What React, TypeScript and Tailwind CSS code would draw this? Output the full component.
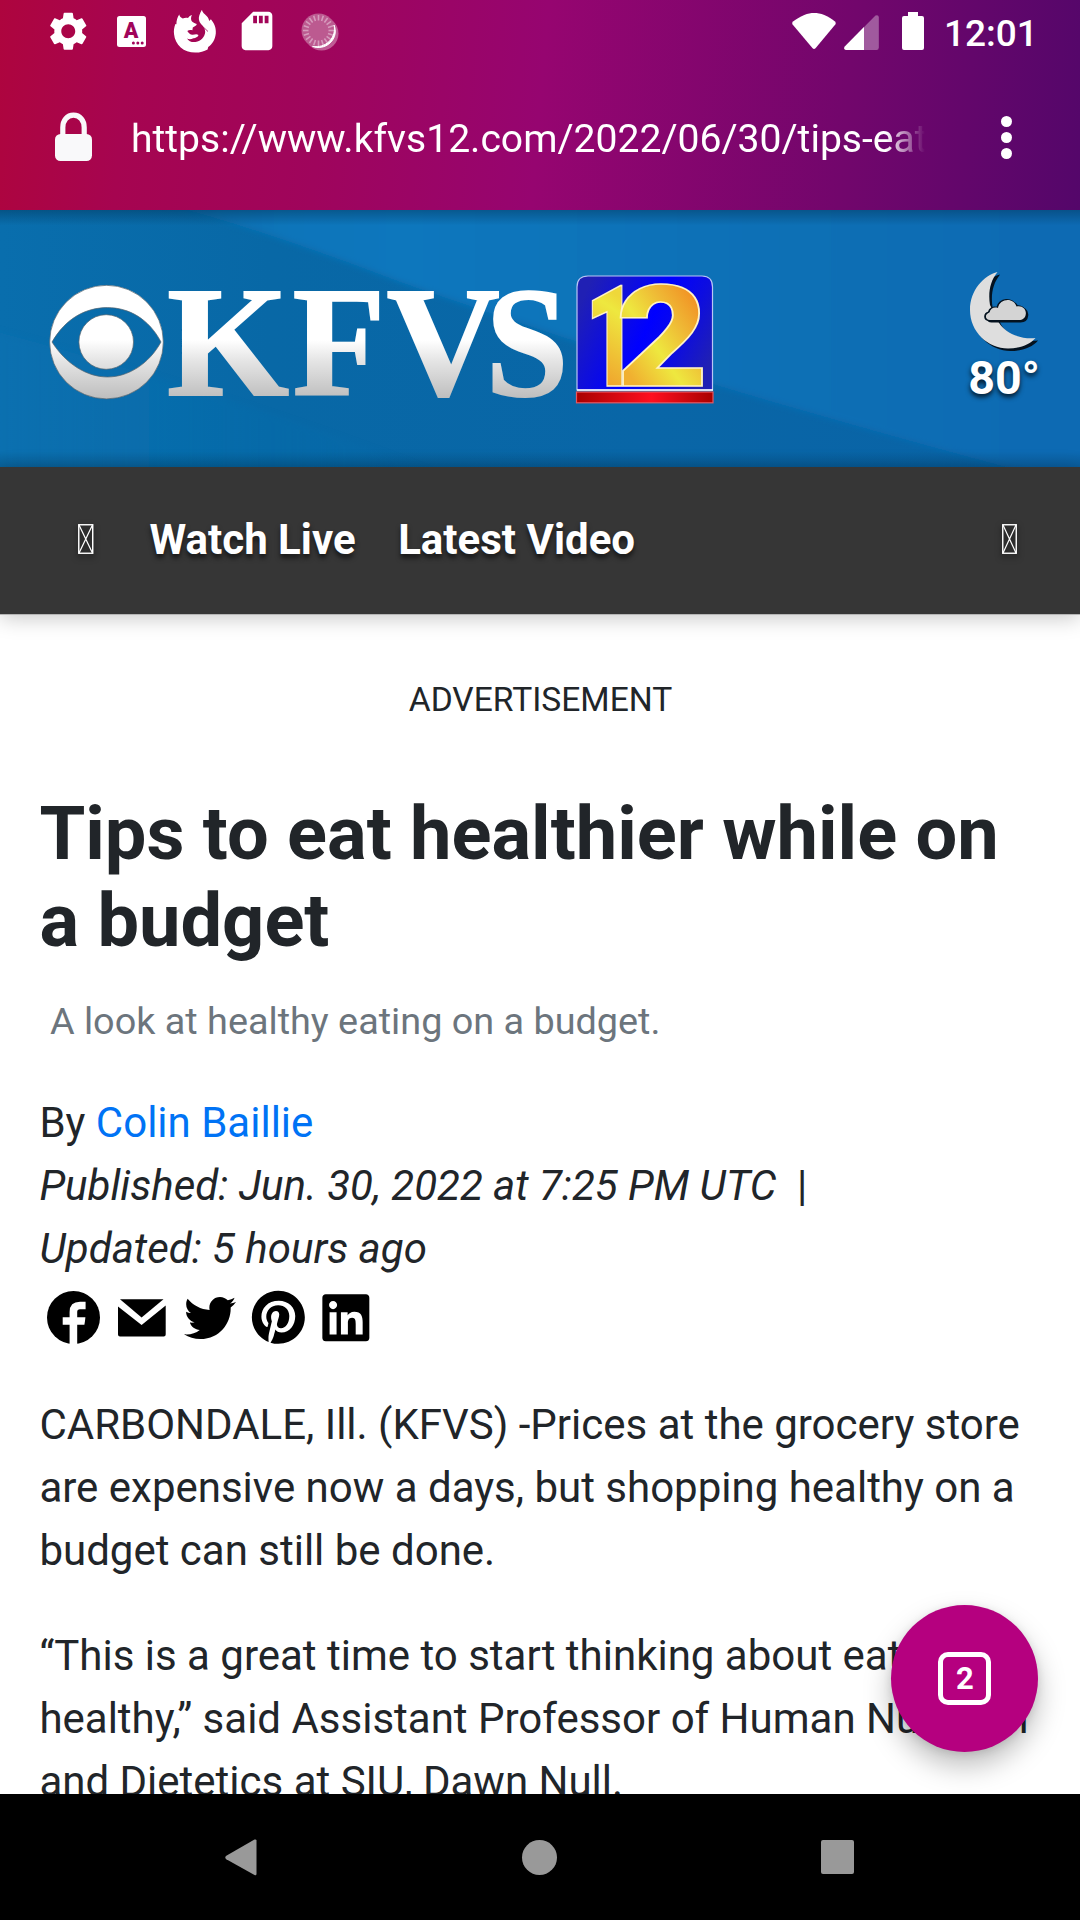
import { FaTwitter, FaPinterest, FaLinkedin } from "react-icons/fa";
import { MdSettings, MdSdStorage } from "react-icons/md";

const LINK_COLOR = "text-[#0073f5]";

function LetterCard() {
  return (
    <svg className="h-[31px] w-[29px]" viewBox="0 0 29 31">
      <rect width="29" height="31" rx="2.5" fill="#fff" />
      <text x="14.2" y="22.4" textAnchor="middle" fontFamily="Roboto, sans-serif" fontWeight="900" fontSize="21.5" fill="#a1055a">A</text>
      <circle cx="16.4" cy="27" r="1.5" fill="#a1055a" />
      <circle cx="20.8" cy="27" r="1.5" fill="#a1055a" />
      <circle cx="25.2" cy="27" r="1.5" fill="#a1055a" />
    </svg>
  );
}

function FoxIcon() {
  return (
    <svg className="h-[44px] w-[44px]" viewBox="173 8.5 44 44" fill="#fff">
      <path d="M179.3 14C179.6 16 181 17.4 182.8 17.9C184.5 17.2 186.4 17.1 188 17.5C189 15.8 190.4 14.8 192 14.4C190.8 16.6 190.8 18.6 191.6 20.4C192.6 22 195 22.7 196.8 23.4C196.5 25.2 194.3 26 192.8 27L192.4 29.8C190.6 29.3 188.6 29.4 187.3 30.5C188.4 32.4 190.3 34.4 192.8 34.2C195 34 196.6 33.2 198.5 34.4C197.8 36.9 195.3 37 193.4 37.8C191 38.9 188.9 38.9 187 38C188.6 40.9 192 42 195.5 41.5C201.2 40.8 204.8 36.5 205.2 31.6C205.2 28 203.4 25.6 201 23.4C198.8 21 198.3 17.8 199.3 15C200 12.7 201.1 10.7 201.9 9.2C202.5 12 204.6 13.6 206.6 15.4C208.4 17 208.8 18.5 209.2 20.4L210.9 18.8C214 22.4 216.3 27.2 215.8 33C215.1 39.6 212 44 208.2 46.5L207.6 49C204 51 199.6 52.2 195.2 52.1C183.8 51.9 175.1 44.6 174 33.4C173.6 30.2 174.1 26.8 175.4 23.5L176.4 23.8C176.4 20 177.4 16.6 179.3 14Z" />
      <path d="M203.8 27L208 31" stroke="#a1055a" strokeWidth="0.8" />
    </svg>
  );
}

function SyncSpinner() {
  const ticks = Array.from({ length: 20 }, (_, i) => i * 18);
  return (
    <svg className="h-[40px] w-[38px]" viewBox="0 0 38 40">
      <circle cx="20.5" cy="21.5" r="17" fill="#fff" opacity="0.35" />
      <circle cx="17.5" cy="18.5" r="17" fill="#bc5a90" />
      <g stroke="#d69bbd" strokeWidth="1.6">
        {ticks.map((a) => (
          <line key={a} x1="17.5" y1="3" x2="17.5" y2="8.5" transform={`rotate(${a} 17.5 18.5)`} />
        ))}
      </g>
      <path d="M33 13C35.5 19 34.5 26 29 31C24 35.6 17 36.6 11.5 34.4C18 35.4 24 33.5 28.2 29.4C32.6 25 34.4 19 33 13Z" fill="#fff" stroke="#fff" strokeWidth="1" />
    </svg>
  );
}

function StatusBar() {
  return (
    <div className="flex h-[63px] items-start text-white">
      <div className="flex h-[62px] flex-1 items-center">
        <MdSettings className="ml-[45px] size-[46.5px] shrink-0" />
        <div className="ml-[25.5px]"><LetterCard /></div>
        <div className="ml-[27px]"><FoxIcon /></div>
        <MdSdStorage className="ml-[17px] size-[46px] shrink-0" />
        <div className="ml-[20.5px] pt-[1px]"><SyncSpinner /></div>
      </div>
      <svg className="mt-[12px] h-[40px] w-[134px]" viewBox="791 12 134 40" fill="#fff">
        <path d="M793 21.5C801 15.5 808 13 814 13C820.5 13 828 15.5 835 21.5Q836.5 23 835.3 24.6L815.5 48.2Q814 49.6 812.6 48.2L792.6 24.6Q791.4 23 793 21.5Z" />
        <path d="M846 50H876.5Q878.8 50 878.8 47.8V17Q878.4 14.3 875.5 15.5L844.8 46.6Q843 49.2 846 50Z" opacity="0.34" />
        <path d="M846 50H864V27L844.8 46.6Q843 49.2 846 50Z" />
        <path d="M908 12H918V16H922Q924 16 924 18V48Q924 50 922 50H904Q902 50 902 48V18Q902 16 904 16H908Z" />
      </svg>
      <div className="mr-[42.5px] ml-[19px] mt-[11.5px] w-[93.5px] text-[37px] leading-[44px] font-medium">12:01</div>
    </div>
  );
}

function AddressBar() {
  return (
    <div className="flex h-[147px] items-start text-white">
      <svg className="mt-[49px] ml-[55px] h-[49px] w-[37px] shrink-0" viewBox="0 0 37 49">
        <path d="M7.8 25V15.5C7.8 8.5 12 3.2 18.5 3.2S29.2 8.5 29.2 15.5V25" fill="none" stroke="#f9f9fa" strokeWidth="5.2" />
        <rect y="22" width="37" height="27" rx="5.5" fill="#f9f9fa" />
      </svg>
      <div className="mt-[51px] ml-[39px] w-[794px] overflow-hidden text-[39.1px] leading-[50px] whitespace-nowrap [mask-image:linear-gradient(to_right,black_755px,transparent_794px)]">
        https://www.kfvs12.com/2022/06/30/tips-eat
      </div>
      <div className="mt-[53px] ml-[76px] flex flex-col gap-[5px]">
        <i className="size-[11px] rounded-full bg-white" />
        <i className="size-[11px] rounded-full bg-white" />
        <i className="size-[11px] rounded-full bg-white" />
      </div>
    </div>
  );
}

function BannerBackdrop() {
  return (
    <svg className="absolute inset-0 h-full w-full" viewBox="0 0 1080 257" preserveAspectRatio="none">
      <defs>
        <linearGradient id="base" x1="0" x2="1">
          <stop offset="0" stopColor="#096ead" />
          <stop offset="0.25" stopColor="#0868a6" />
          <stop offset="0.6" stopColor="#0966a7" />
          <stop offset="1" stopColor="#0963a6" />
        </linearGradient>
        <linearGradient id="beam" x1="0" x2="1">
          <stop offset="0" stopColor="#0869a8" />
          <stop offset="0.15" stopColor="#0a75ba" />
          <stop offset="0.27" stopColor="#0a77bd" />
          <stop offset="0.7" stopColor="#0a6fb5" />
          <stop offset="1" stopColor="#0a6ab3" />
        </linearGradient>
        <linearGradient id="low" x1="0" x2="1">
          <stop offset="0" stopColor="#0a72b2" />
          <stop offset="1" stopColor="#0a72b2" stopOpacity="0" />
        </linearGradient>
        <linearGradient id="edges" x1="0" x2="0" y1="0" y2="1">
          <stop offset="0" stopColor="#003050" stopOpacity="0.42" />
          <stop offset="0.06" stopColor="#003050" stopOpacity="0" />
          <stop offset="0.94" stopColor="#003050" stopOpacity="0" />
          <stop offset="1" stopColor="#003050" stopOpacity="0.25" />
        </linearGradient>
        <filter id="soft"><feGaussianBlur stdDeviation="3" /></filter>
      </defs>
      <rect width="1080" height="257" fill="url(#base)" />
      <path d="M-10 120Q200 175 460 270H-10Z" fill="url(#low)" opacity="0.5" filter="url(#soft)" />
      <path d="M150 -10Q260 18 400 72Q600 142 780 194T1095 280V-10Z" fill="url(#beam)" filter="url(#soft)" />
      <rect width="1080" height="257" fill="url(#edges)" />
    </svg>
  );
}

function StationLogo() {
  return (
    <svg className="h-[134px] w-[670px]" viewBox="46 273 670 134">
      <defs>
        <linearGradient id="steel" gradientUnits="userSpaceOnUse" x1="0" y1="285" x2="0" y2="400">
          <stop offset="0" stopColor="#fff" />
          <stop offset="0.48" stopColor="#fff" />
          <stop offset="0.65" stopColor="#e6e6e6" />
          <stop offset="1" stopColor="#bcbcbc" />
        </linearGradient>
        {/* the digit gradients run in each digit's own coordinates, baseline at 0 */}
        <linearGradient id="gold" gradientUnits="userSpaceOnUse" x1="0" y1="-30" x2="84" y2="-82">
          <stop offset="0" stopColor="#f0b030" />
          <stop offset="0.35" stopColor="#eee83f" />
          <stop offset="0.65" stopColor="#efb835" />
          <stop offset="1" stopColor="#f2861f" />
        </linearGradient>
        <linearGradient id="goldBar" gradientUnits="userSpaceOnUse" x1="10" y1="0" x2="50" y2="-90">
          <stop offset="0" stopColor="#f09a2b" />
          <stop offset="0.85" stopColor="#eee83f" />
          <stop offset="1" stopColor="#efd83a" />
        </linearGradient>
        <linearGradient id="royal" x1="0" x2="1" y1="0.3" y2="0.7">
          <stop offset="0" stopColor="#2020b4" />
          <stop offset="0.5" stopColor="#0000ff" />
          <stop offset="0.75" stopColor="#0d0de0" />
          <stop offset="1" stopColor="#2020b4" />
        </linearGradient>
        <linearGradient id="crimson">
          <stop offset="0" stopColor="#a80000" />
          <stop offset="0.55" stopColor="#ff1020" />
          <stop offset="1" stopColor="#a80000" />
        </linearGradient>
      </defs>
      <g fill="url(#steel)" stroke="#56646e" strokeWidth="0.7">
        <path fillRule="evenodd" d="M106.5 285.3A56.8 56.8 0 1 0 106.5 398.9A56.8 56.8 0 1 0 106.5 285.3ZM52 342C66 318 86 307.6 107.5 307.6S149 319 161 342C149 364 128 377 107.5 377S66 364 52 342Z" />
        <circle cx="106.2" cy="342" r="27.3" />
      </g>
      <g fill="url(#steel)" stroke="url(#steel)" strokeWidth="1.8" fontFamily="Liberation Serif, Tinos, serif" fontWeight="700" fontSize="157">
        <text x="167" y="395">K</text>
        <text x="292.5" y="395" textLength="93" lengthAdjust="spacingAndGlyphs">F</text>
        <text x="386.5" y="395">V</text>
        <text x="485.5" y="394.5" textLength="83" lengthAdjust="spacingAndGlyphs">S</text>
      </g>
      <path d="M577 390V287Q577 276 588 276H702Q712.5 276 712.5 287V390Z" fill="url(#royal)" stroke="#b9c6f5" strokeWidth="1.2" />
      <path d="M577 390H713" stroke="#fff" strokeWidth="1.4" />
      <rect x="576.5" y="392" width="136.5" height="10.8" fill="url(#crimson)" stroke="#e8575f" strokeWidth="1.2" />
      <g fontFamily="Roboto, sans-serif" fontWeight="900" fontSize="141" stroke="#fff3c4" strokeWidth="1.6">
        <text transform="translate(585 385.5) scale(0.64 1)" fill="url(#goldBar)">1</text>
        <text transform="translate(616 385.5) scale(1.13 1)" fill="url(#gold)">2</text>
      </g>
    </svg>
  );
}

function Weather() {
  const moon = "M997.5 272C984 275.5 970 290 970 310C970 332 988 348.5 1008 348.5C1020 348.5 1030 344.5 1035.5 338C1020 339.5 1005 333 998.5 322L990 305C988 293 990 281 997.5 272Z";
  const cloud = "M990 320C985 320 984.5 314 989.5 312.5C990.5 308.5 994 306.5 998 308C999.5 298 1014 297 1016.5 306.5C1022 305 1026.5 309 1025.8 314C1025.4 318 1022.5 320 1019 320Z";
  return (
    <div className="flex w-[70px] flex-col items-center">
      <svg className="h-[84px] w-[70px]" viewBox="969 269 70 84">
        <path d={moon} transform="translate(2.6 2.6)" fill="#04121f" />
        <path d={moon} fill="#dedede" />
        <path d={cloud} transform="translate(1.6 1.6)" fill="#04121f" stroke="#04121f" strokeWidth="1.6" />
        <path d={cloud} transform="translate(-0.8 0)" fill="none" stroke="#04121f" strokeWidth="2" />
        <path d={cloud} fill="#d4d4d4" />
      </svg>
      <div className="-mt-[2px] text-[46.6px] leading-[54px] font-bold text-white [text-shadow:0_3px_5px_rgba(0,0,0,0.8)]">80°</div>
    </div>
  );
}

function MissingGlyph({ width }: { width: number }) {
  return (
    <svg width={width} height="30" viewBox="0 0 15 30" preserveAspectRatio="none" fill="none" stroke="#fff" className="drop-shadow-[0_3px_3px_rgba(0,0,0,0.6)]">
      <rect x="0.75" y="0.75" width="13.5" height="28.5" strokeWidth="1.4" />
      <path d="M1 1L14 29M14 1L1 29" strokeWidth="1.2" />
    </svg>
  );
}

function SiteNav() {
  return (
    <nav className="relative z-10 flex h-[147px] items-start bg-[#363636] text-[42px] leading-[63px] font-bold text-white shadow-[0_1px_0_#b5b5b5,0_4px_20px_rgba(0,0,0,0.22)]">
      <div className="mt-[57px] ml-[78px]"><MissingGlyph width={15.5} /></div>
      <div className="mt-[41px] ml-[56px] flex gap-[42.5px] [text-shadow:0_4px_5px_rgba(0,0,0,0.6)]">
        <span>Watch Live</span>
        <span>Latest Video</span>
      </div>
      <div className="mt-[57px] mr-[63px] ml-auto"><MissingGlyph width={15} /></div>
    </nav>
  );
}

function ShareRow() {
  return (
    <div className="grid h-[56px] w-[341px] grid-cols-5 place-items-center text-black">
      <svg className="h-[53px] w-[53px]" viewBox="0 0 53 53">
        <circle cx="26.5" cy="26.5" r="26.5" />
        <path d="M26.4 54V21Q26.4 14.5 33 14.5H38.6" fill="none" stroke="#fff" strokeWidth="7.6" />
        <path d="M15.7 30H38L37.4 33.7H15.7V26.3H38.4L38 30" fill="#fff" />
      </svg>
      <svg className="h-[38px] w-[48px]" viewBox="0 0 48 38">
        <path d="M2 0.3H45.5L23.6 18.6Z" />
        <path d="M0 7.6L23.6 26L47.7 6.6V35.5Q47.7 37.6 45.7 37.6H2Q0 37.6 0 35.6Z" />
      </svg>
      <FaTwitter className="size-[52px]" />
      <FaPinterest className="size-[54.7px]" />
      <FaLinkedin className="size-[53.7px]" />
    </div>
  );
}

function Article() {
  return (
    <main className="h-[1180px] overflow-hidden bg-white text-[42px] leading-[63px] text-[#212529]">
      <p className="mt-[61px] pl-px text-center text-[33.6px] leading-[50px]">ADVERTISEMENT</p>
      <div className="px-[39.4px]">
        <h1 className="mt-[64.5px] text-[74px] leading-[87px] font-bold whitespace-nowrap">
          Tips to eat healthier while on<br />a budget
        </h1>
        <p className="mt-[29.5px] ml-[10.5px] text-[37.8px] leading-[56.7px] text-[#6c757d]">A look at healthy eating on a budget.</p>
        <div className="mt-[41.4px]">
          By <a className={LINK_COLOR}>Colin Baillie</a>
        </div>
        <div className="whitespace-pre">
          <em>Published: Jun. 30, 2022 at 7:25 PM UTC</em>{"  |"}
        </div>
        <div><em>Updated: 5 hours ago</em></div>
        <div className="mt-[9.5px]"><ShareRow /></div>
        <p className="mt-[47.5px] whitespace-nowrap">
          CARBONDALE, Ill. (KFVS) -Prices at the grocery store<br />
          are expensive now a days, but shopping healthy on a<br />
          budget can still be done.
        </p>
        <p className="mt-[42px] whitespace-nowrap">
          “This is a great time to start thinking about eating<br />
          healthy,” said Assistant Professor of Human Nutrition<br />
          and Dietetics at SIU, Dawn Null.
        </p>
      </div>
    </main>
  );
}

function TabsButton() {
  return (
    <button className="absolute top-[1605px] left-[891px] flex size-[147px] items-center justify-center rounded-full bg-[#b5007f] shadow-[0_14px_28px_rgba(0,0,0,0.26),0_2px_8px_rgba(0,0,0,0.1)]">
      <span className="flex size-[53px] items-center justify-center rounded-[10px] border-[5.5px] border-white pl-px text-[31px] leading-none font-bold text-white">2</span>
    </button>
  );
}

function SystemNav() {
  return (
    <footer className="flex h-[126px] items-center bg-black pl-[225px]">
      <svg className="h-[37px] w-[32px]" viewBox="0 0 32 37" fill="#999">
        <path d="M31.5 1.5V35Q31.3 37 29.5 36L1.3 20.3Q-0.6 18.5 1.3 16.8L29.5 0.6Q31.3 0 31.5 1.5Z" />
      </svg>
      <i className="ml-[265px] size-[35px] rounded-full bg-[#999]" />
      <i className="ml-[264px] h-[34px] w-[33px] rounded-[2px] bg-[#999]" />
    </footer>
  );
}

export default function App() {
  return (
    <div className="relative flex h-[1920px] w-[1080px] flex-col overflow-hidden bg-white font-['Roboto',sans-serif]">
      <header className="h-[210px] shrink-0 bg-[linear-gradient(95deg,#ae053e_0%,#a60550_12%,#9f055c_30%,#960570_50%,#72066c_78%,#54066a_100%)]">
        <StatusBar />
        <AddressBar />
      </header>
      <section className="relative h-[257px] shrink-0 overflow-hidden">
        <BannerBackdrop />
        <div className="relative flex items-start justify-between pt-[59px] pr-[41px] pl-[46px]">
          <div className="pt-[4px]"><StationLogo /></div>
          <Weather />
        </div>
      </section>
      <SiteNav />
      <Article />
      <SystemNav />
      <TabsButton />
    </div>
  );
}
